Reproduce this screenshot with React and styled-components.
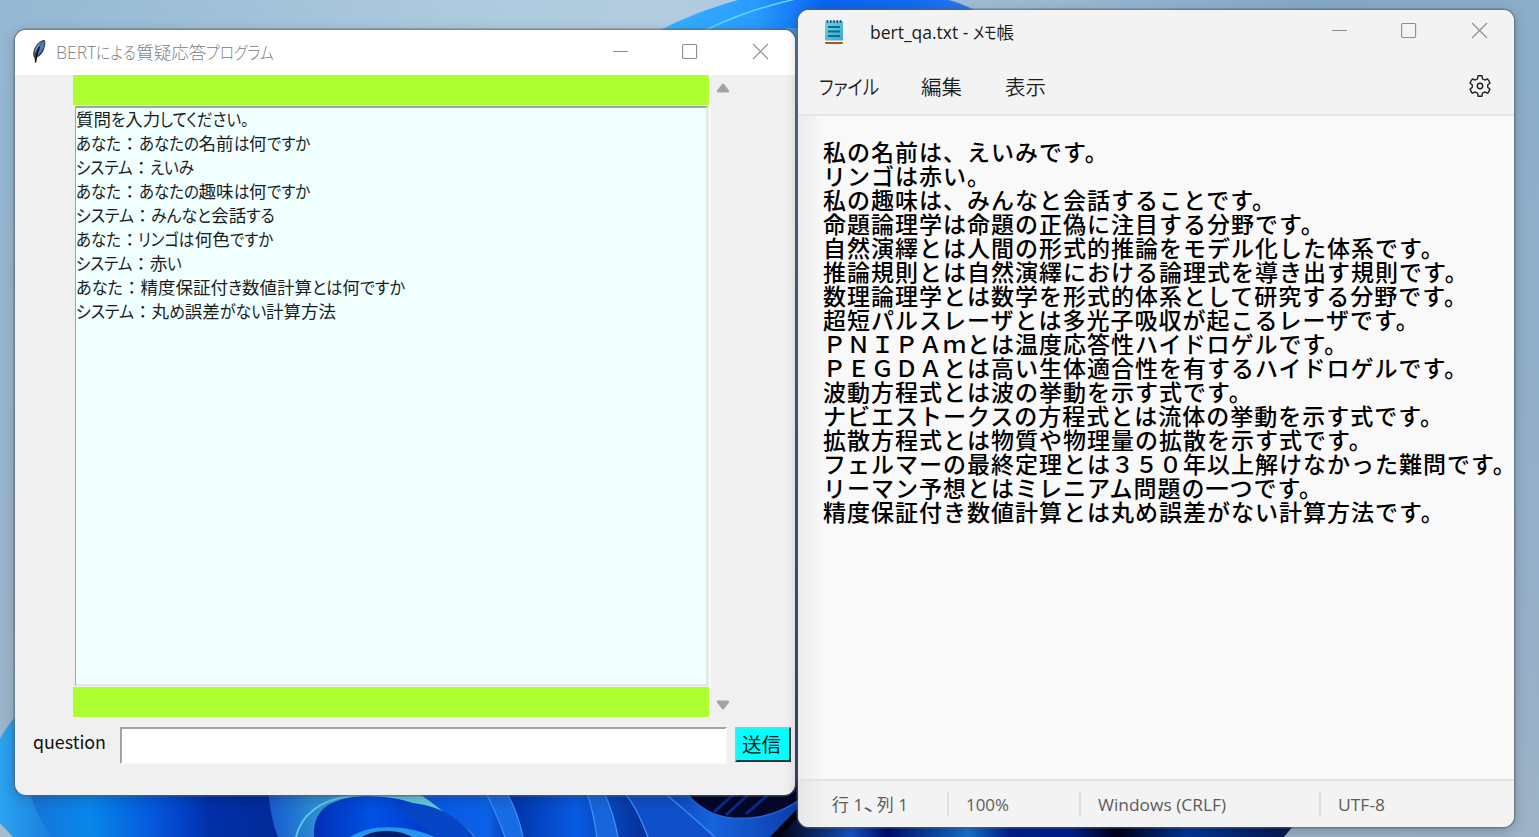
import React, { useLayoutEffect, useRef, useState } from 'react';
import styled, { createGlobalStyle } from 'styled-components';

const chatLog = [
  { text: '質問を入力してください。', width: 173 },
  { text: 'あなた：あなたの名前は何ですか', width: 234 },
  { text: 'システム：えいみ', width: 118 },
  { text: 'あなた：あなたの趣味は何ですか', width: 234 },
  { text: 'システム：みんなと会話する', width: 199 },
  { text: 'あなた：リンゴは何色ですか', width: 197 },
  { text: 'システム：赤い', width: 106 },
  { text: 'あなた：精度保証付き数値計算とは何ですか', width: 329 },
  { text: 'システム：丸め誤差がない計算方法', width: 260 },
];

const documentLines = [
  '私の名前は、えいみです。',
  'リンゴは赤い。',
  '私の趣味は、みんなと会話することです。',
  '命題論理学は命題の正偽に注目する分野です。',
  '自然演繹とは人間の形式的推論をモデル化した体系です。',
  '推論規則とは自然演繹における論理式を導き出す規則です。',
  '数理論理学とは数学を形式的体系として研究する分野です。',
  '超短パルスレーザとは多光子吸収が起こるレーザです。',
  'ＰＮＩＰＡｍとは温度応答性ハイドロゲルです。',
  'ＰＥＧＤＡとは高い生体適合性を有するハイドロゲルです。',
  '波動方程式とは波の挙動を示す式です。',
  'ナビエストークスの方程式とは流体の挙動を示す式です。',
  '拡散方程式とは物質や物理量の拡散を示す式です。',
  'フェルマーの最終定理とは３５０年以上解けなかった難問です。',
  'リーマン予想とはミレニアム問題の一つです。',
  '精度保証付き数値計算とは丸め誤差がない計算方法です。',
];

const KANA = /([\u3000-\u30ff]+)/;

function FitText({ text, width }) {
  const ref = useRef(null);
  const [fit, setFit] = useState(null);
  const runs = text.split(KANA).filter(Boolean);
  const hasKana = KANA.test(text);
  const flexes = (run) => !hasKana || KANA.test(run);

  useLayoutEffect(() => {
    const widths = [...ref.current.children].map((el) => el.getBoundingClientRect().width);
    const total = widths.reduce((sum, w) => sum + w, 0);
    const soft = widths.reduce((sum, w, i) => sum + (flexes(runs[i]) ? w : 0), 0);
    setFit({ widths, scale: (width - total + soft) / soft });
  }, []);

  return (
    <Fitted ref={ref}>
      {runs.map((run, i) => (
        <Run
          key={i}
          $kana={KANA.test(run)}
          style={
            fit && flexes(run)
              ? { width: fit.widths[i] * fit.scale, transform: `scaleX(${fit.scale})` }
              : undefined
          }
        >
          {run}
        </Run>
      ))}
    </Fitted>
  );
}

function Caption() {
  return (
    <Controls>
      <svg width="17" height="17" viewBox="0 0 17 17">
        <path d="M1 8.5H16" />
      </svg>
      <svg width="17" height="17" viewBox="0 0 17 17">
        <rect x=".6" y="1.500" width="14" height="14" rx="1.2" />
      </svg>
      <svg width="17" height="17" viewBox="0 0 17 17">
        <path d="M1 1L16 16M16 1L1 16" />
      </svg>
    </Controls>
  );
}

function FeatherIcon() {
  return (
    <svg width="16" height="26" viewBox="0 0 16 26">
      <path d="M13.600 .800C9 1.500 5 5.500 3 10.500C1.600 14.500 2 17 3.400 19L4.300 24L5.800 18.800C9.500 17 12.500 13 13.500 9C14.300 6 15 3 13.600 .800Z" fill="#39424e" />
      <path d="M13 2C10 4 7.500 9 6 16.500C9 14.800 11.500 11.500 12.600 8C13.300 5.800 13.700 3.500 13 2Z" fill="#3f7fd0" />
      <path d="M11.800 2.300C8 4 5 7.500 3.900 11.500L3.500 15.500C6 10 8.500 6 11.800 2.300Z" fill="#7793b8" />
      <path d="M8.500 8C6.500 12 5.300 16 4.500 23.500" stroke="#0b0d12" strokeWidth="1.500" fill="none" />
    </svg>
  );
}

function NotepadIcon() {
  return (
    <svg width="20" height="26" viewBox="0 0 20 26">
      <defs>
        <linearGradient id="pad" x1="0" y1="0" x2="1" y2="1">
          <stop offset="0" stopColor="#6fd3e8" />
          <stop offset="1" stopColor="#39a9c9" />
        </linearGradient>
      </defs>
      <path d="M1 22H19V24.500Q19 26 17.500 26H2.500Q1 26 1 24.500Z" fill="#b4540f" />
      <path d="M1 21H19V24H1Z" fill="#f4f6f7" />
      <rect x="1" y="3" width="18" height="19.500" rx="1" fill="url(#pad)" />
      <path d="M3.500 2V5M6.800 2V5M10 2V5M13.300 2V5M16.500 2V5" stroke="#0e5c78" strokeWidth="1.500" />
      <path d="M4 9H16M4 13.500H16M4 18H16" stroke="#0c6c8c" strokeWidth="1.800" />
    </svg>
  );
}

function GearIcon() {
  return (
    <svg width="24" height="24" viewBox="0 0 24 24" fill="none" stroke="#222" strokeWidth="1.400" strokeLinejoin="round">
      <path d="M10.200 1.700H13.800L14.500 4.800L16.700 6L19.700 5L21.600 8.200L21.900 9L19.700 11V13.200L22 15.200L20.200 18.600L19.500 19.100L16.600 18L14.500 19.200L13.800 22.300H10.200L9.500 19.200L7.400 18L4.500 19.100L3.800 18.600L2 15.200L4.300 13.200V11L2.100 9L2.400 8.200L4.300 5L7.300 6L9.500 4.800Z" />
      <circle cx="12" cy="12" r="2.700" />
    </svg>
  );
}

function Wallpaper() {
  return (
    <Backdrop viewBox="0 0 1539 837" preserveAspectRatio="none">
      <defs>
        <linearGradient id="sky" x1="0" x2="1539" y1="0" y2="0" gradientUnits="userSpaceOnUse">
          <stop offset="0" stopColor="#94b8d3" />
          <stop offset=".3" stopColor="#adcade" />
          <stop offset=".43" stopColor="#b3cde1" />
          <stop offset=".7" stopColor="#98b8d1" />
          <stop offset=".85" stopColor="#82aac8" />
          <stop offset="1" stopColor="#8baecb" />
        </linearGradient>
        <linearGradient id="haze" x1="0" x2="0" y1="0" y2="1">
          <stop offset="0" stopColor="#9fb2c8" stopOpacity="0" />
          <stop offset=".6" stopColor="#9fb2c8" stopOpacity=".45" />
          <stop offset="1" stopColor="#a3b4c5" stopOpacity=".75" />
        </linearGradient>
        <linearGradient id="bloomTop" x1="660" x2="1000" y1="0" y2="0" gradientUnits="userSpaceOnUse">
          <stop offset="0" stopColor="#35b2ff" />
          <stop offset=".28" stopColor="#2a9bff" />
          <stop offset=".48" stopColor="#0864f2" />
          <stop offset=".75" stopColor="#146bf0" />
          <stop offset="1" stopColor="#2f80ee" />
        </linearGradient>
        <linearGradient id="gap" x1="0" x2="0" y1="30" y2="800" gradientUnits="userSpaceOnUse">
          <stop offset="0" stopColor="#3f96d8" />
          <stop offset=".2" stopColor="#3569b3" />
          <stop offset=".6" stopColor="#244b8f" />
          <stop offset="1" stopColor="#101c52" />
        </linearGradient>
        <linearGradient id="outer" x1="0" x2="60" y1="0" y2="0" gradientUnits="userSpaceOnUse">
          <stop offset="0" stopColor="#2ba3ef" />
          <stop offset="1" stopColor="#1678dd" />
        </linearGradient>
        <linearGradient id="petal" x1="30" x2="270" y1="0" y2="0" gradientUnits="userSpaceOnUse">
          <stop offset="0" stopColor="#1972d8" />
          <stop offset=".25" stopColor="#0787ea" />
          <stop offset=".55" stopColor="#0551d8" />
          <stop offset=".75" stopColor="#002fa9" />
          <stop offset="1" stopColor="#002b99" />
        </linearGradient>
        <linearGradient id="swirl" x1="268" x2="420" y1="0" y2="0" gradientUnits="userSpaceOnUse">
          <stop offset="0" stopColor="#1659cf" />
          <stop offset=".3" stopColor="#2a8bd3" />
          <stop offset="1" stopColor="#65c9d9" />
        </linearGradient>
        <linearGradient id="core" x1="315" x2="430" y1="0" y2="0" gradientUnits="userSpaceOnUse">
          <stop offset="0" stopColor="#0030b6" />
          <stop offset=".5" stopColor="#0052e5" />
          <stop offset="1" stopColor="#003acb" />
        </linearGradient>
        <linearGradient id="folds" x1="400" x2="800" y1="0" y2="0" gradientUnits="userSpaceOnUse">
          <stop offset="0" stopColor="#0653df" />
          <stop offset=".22" stopColor="#0b62e6" />
          <stop offset=".28" stopColor="#0034a7" />
          <stop offset=".44" stopColor="#085be2" />
          <stop offset=".6" stopColor="#07329e" />
          <stop offset=".78" stopColor="#1663dc" />
          <stop offset="1" stopColor="#0b3ca8" />
        </linearGradient>
        <linearGradient id="floor" x1="780" x2="1290" y1="0" y2="0" gradientUnits="userSpaceOnUse">
          <stop offset="0" stopColor="#020517" />
          <stop offset=".14" stopColor="#1754c4" />
          <stop offset=".21" stopColor="#000d6e" />
          <stop offset=".37" stopColor="#1674cf" />
          <stop offset=".45" stopColor="#03208c" />
          <stop offset=".57" stopColor="#00208e" />
          <stop offset=".66" stopColor="#000019" />
          <stop offset=".8" stopColor="#02379b" />
          <stop offset="1" stopColor="#06184d" />
        </linearGradient>
      </defs>
      <rect width="1539" height="837" fill="url(#sky)" />
      <rect width="1539" height="837" fill="url(#haze)" />
      <path d="M655 33C690 14 720 5 752 -4H930C950 -1 970 6 984 16V60H655Z" fill="url(#bloomTop)" />
      <path d="M700 33C735 15 765 6 800 -2" stroke="#63d4fa" strokeWidth="1.500" fill="none" />
      <rect x="785" y="28" width="24" height="790" fill="url(#gap)" />
      <path d="M16 716C4 730 -4 742 -6 760V820L12 837H200V700Z" fill="url(#outer)" />
      <path d="M-2 821L13 837H-2Z" fill="#a9bccd" />
      <path d="M28 785C34 808 42 825 52 837H280V785Z" fill="url(#petal)" />
      <path d="M268 790C270 810 273 825 278 837H480L430 785Z" fill="url(#swirl)" />
      <path d="M405 785H815V837H470C450 815 430 800 405 785Z" fill="url(#folds)" />
      <path d="M314 837C313 822 318 811 330 804C352 793 385 794 406 801C435 810 458 823 470 837Z" fill="url(#core)" />
      <path d="M296 837C301 815 320 800 350 796C390 792 445 803 474 837" stroke="#61c8e4" strokeWidth="1.800" fill="none" />
      <path d="M395 807C410 814 417 828 440 838H475C455 812 430 802 395 802Z" fill="#0645c6" />
      <path d="M350 837C370 824 405 824 435 837Z" fill="#2297eb" />
      <path d="M362 837C375 829 398 829 412 837Z" fill="#001c6b" />
      <path d="M484 790C494 807 500 823 505 837H523C519 818 513 803 505 790Z" fill="#176be5" />
      <path d="M586 790C592 807 595 823 597 837H618C615 820 609 803 603 790Z" fill="#1764dc" />
      <path d="M622 790C635 804 642 822 648 837H715C698 820 679 804 664 790Z" fill="#104fca" />
      <path d="M484 790C494 807 500 823 505 837M505 790C513 803 519 818 523 837M586 790C592 807 595 823 597 837M603 790C609 803 615 820 618 837M622 790C635 804 642 822 648 837M660 790C679 804 698 822 715 837" stroke="#3b91f2" strokeWidth="1.300" fill="none" />
      <path d="M686 793C704 814 723 820 750 818C775 816 790 806 800 800V780H686Z" fill="#04072b" />
      <path d="M714 812L735 793M726 815L750 793M746 814L770 793" stroke="#0b2b88" strokeWidth="3" fill="none" />
      <path d="M686 793C704 814 723 820 750 818C775 816 790 806 800 800" stroke="#2267d8" strokeWidth="1.500" fill="none" />
      <path d="M770 837L800 806V837Z" fill="#02040f" />
      <path d="M795 820H1298L1284 837H780Z" fill="url(#floor)" />
    </Backdrop>
  );
}

function ChatWindow() {
  return (
    <Window $left={15} $top={30} $width={780} $height={765}>
      <ChatTitle>
        <FeatherIcon />
        <Title $dim>
          <FitText text="BERTによる質疑応答プログラム" width={218} />
        </Title>
        <Caption />
      </ChatTitle>
      <ChatBody>
        <LogPane>
          <Band />
          <Log>
            {chatLog.map((line, i) => (
              <LogLine key={i}>
                <FitText {...line} />
              </LogLine>
            ))}
          </Log>
          <Band />
        </LogPane>
        <Scrollbar>
          <Arrow viewBox="0 0 14 10">
            <path d="M5.800 1.200Q7 -.2 8.200 1.200L13 7.500Q13.500 9.500 12 9.500H2Q.500 9.500 1 7.500Z" />
          </Arrow>
          <Arrow viewBox="0 0 14 10">
            <path d="M5.800 8.800Q7 10.200 8.200 8.800L13 2.500Q13.500 .5 12 .5H2Q.500 .5 1 2.500Z" />
          </Arrow>
        </Scrollbar>
      </ChatBody>
      <Form>
        <Label>
          <FitText text="question" width={73} />
        </Label>
        <Input />
        <Send>送信</Send>
      </Form>
    </Window>
  );
}

function NotepadWindow() {
  return (
    <Window $left={798} $top={10} $width={716} $height={817}>
      <NoteTitle>
        <NotepadIcon />
        <Title>
          <FitText text="bert_qa.txt - メモ帳" width={144} />
        </Title>
        <Caption />
      </NoteTitle>
      <Menu>
        <MenuItem $width={102}>
          <FitText text="ファイル" width={60} />
        </MenuItem>
        <MenuItem $width={84}>編集</MenuItem>
        <MenuItem $width={84}>表示</MenuItem>
        <GearIcon />
      </Menu>
      <Editor>
        {documentLines.map((line) => (
          <div key={line}>{line}</div>
        ))}
      </Editor>
      <StatusBar>
        <Status $width={149} $pad={34}>
          <FitText text="行 1、列 1" width={76} />
        </Status>
        <Status $width={132}>
          <FitText text="100%" width={43} />
        </Status>
        <Status $width={240}>
          <FitText text="Windows (CRLF)" width={128} />
        </Status>
        <Status $width={180}>
          <FitText text="UTF-8" width={47} />
        </Status>
      </StatusBar>
    </Window>
  );
}

function App() {
  return (
    <Desktop>
      <GlobalStyle />
      <Wallpaper />
      <ChatWindow />
      <NotepadWindow />
    </Desktop>
  );
}

export default App;

const GlobalStyle = createGlobalStyle`
  * {
    box-sizing: border-box;
  }

  body {
    margin: 0;
    overflow: hidden;
  }
`;

const Desktop = styled.div`
  position: relative;
  width: 1539px;
  height: 837px;
  overflow: hidden;
  font-family: 'Noto Sans', 'Noto Sans CJK JP', sans-serif;
`;

const Backdrop = styled.svg`
  display: block;
  width: 100%;
  height: 100%;
`;

const Window = styled.section`
  position: absolute;
  left: ${(p) => p.$left}px;
  top: ${(p) => p.$top}px;
  width: ${(p) => p.$width}px;
  height: ${(p) => p.$height}px;
  display: flex;
  flex-direction: column;
  background: #f0f0f0;
  border-radius: 11px;
  overflow: hidden;
  box-shadow: 0 0 0 1.5px rgba(90, 100, 112, 0.6), 0 3px 14px rgba(0, 0, 0, 0.22);
`;

const Fitted = styled.span`
  display: inline-block;
  white-space: pre;
`;

const Run = styled.span`
  display: inline-block;
  transform-origin: left;
  font-feature-settings: ${(p) => (p.$kana ? "'palt'" : 'normal')};
`;

const Controls = styled.div`
  display: flex;
  gap: 53px;
  margin-left: auto;
  margin-right: 26px;

  svg {
    fill: none;
    stroke: #8c8c8c;
    stroke-width: 1.1;
  }
`;

const ChatTitle = styled.header`
  display: flex;
  align-items: center;
  flex: none;
  height: 45px;
  padding: 0 0 2px 16px;
  background: #ffffff;
`;

const NoteTitle = styled.header`
  display: flex;
  align-items: center;
  flex: none;
  height: 45px;
  padding: 0 0 4px 26px;
  background: #f3f3f3;
`;

const Title = styled.div`
  margin-left: ${(p) => (p.$dim ? 9 : 26)}px;
  padding-top: ${(p) => (p.$dim ? 0 : 2)}px;
  font-size: 17.5px;
  line-height: 24px;
  font-weight: ${(p) => (p.$dim ? 300 : 400)};
  font-family: 'Open Sans', 'Noto Sans CJK JP', sans-serif;
  color: ${(p) => (p.$dim ? '#808080' : '#1c1c1c')};
`;

const ChatBody = styled.div`
  display: flex;
  flex: none;
  height: 642px;
  padding-left: 58px;
`;

const LogPane = styled.div`
  display: flex;
  flex-direction: column;
  width: 638px;
  border-right: 2px solid #f9f9f9;
`;

const Band = styled.div`
  flex: none;
  height: 30px;
  background: #adff2f;
`;

const Log = styled.div`
  flex: 1;
  margin: 1px 1px 1px 2px;
  background: #f0ffff;
  border: 2px solid;
  border-color: #a0a5a5 #dfe8e8 #dfe8e8 #a0a5a5;
  border-width: 2px 2px 2px 1px;
`;

const LogLine = styled.div`
  height: 24px;
  margin-top: -1px;
  margin-bottom: 1px;
  font: 17.5px/24px 'Noto Sans CJK JP', sans-serif;
  color: #1b1d1d;
`;

const Scrollbar = styled.div`
  display: flex;
  flex-direction: column;
  justify-content: space-between;
  padding: 8px 0 7px 5px;
`;

const Arrow = styled.svg`
  width: 14px;
  height: 10px;
  fill: #a3a3a3;
`;

const Form = styled.div`
  display: flex;
  align-items: flex-start;
  padding: 10px 0 0 18px;
`;

const Label = styled.label`
  width: 87px;
  font: 18px/29px 'Noto Sans CJK JP', sans-serif;
  color: #111;
`;

const Input = styled.input`
  width: 607px;
  height: 37px;
  padding: 0 4px;
  background: #ffffff;
  border: 2px solid;
  border-color: #a3a3a3 #fbfbfb #fbfbfb #a3a3a3;
  outline: none;
`;

const Send = styled.button`
  width: 56px;
  height: 35px;
  margin-left: 8px;
  padding: 0 3px 2px 0;
  background: #00ffff;
  border: 2px solid;
  border-color: #30f0f0 #073c3c #073c3c #30f0f0;
  font: 19.5px/28px 'Noto Sans CJK JP', sans-serif;
  color: #062222;
`;

const Menu = styled.nav`
  display: flex;
  align-items: center;
  flex: none;
  height: 61px;
  padding: 3px 22px 1px 21px;
  background: #f3f3f3;
  border-bottom: 2px solid #e5e5e5;

  svg {
    margin-left: auto;
  }
`;

const MenuItem = styled.span`
  width: ${(p) => p.$width}px;
  font: 20.5px/30px 'Noto Sans CJK JP', sans-serif;
  font-weight: 350;
  color: #1c1c1c;
`;

const Editor = styled.main`
  flex: 1;
  padding: 23px 0 0 25px;
  background: linear-gradient(to right, #ececec, #f9f9f9 26px);
  font: 500 23px/24px 'Noto Sans CJK JP', sans-serif;
  letter-spacing: 1px;
  color: #000000;
  white-space: nowrap;
`;

const StatusBar = styled.footer`
  display: flex;
  align-items: center;
  flex: none;
  height: 48px;
  background: linear-gradient(to right, #e6e6e6, #f3f3f3 30px);
  border-top: 2px solid #e3e3e3;
`;

const Status = styled.div`
  width: ${(p) => p.$width + 2}px;
  height: 24px;
  margin-right: -2px;
  padding-left: ${(p) => p.$pad || 19}px;
  border-right: 2px solid #dedede;
  font: 17px/25px 'Open Sans', 'Noto Sans CJK JP', sans-serif;
  color: #5c5c5c;

  &:last-child {
    border-right: none;
  }
`;
